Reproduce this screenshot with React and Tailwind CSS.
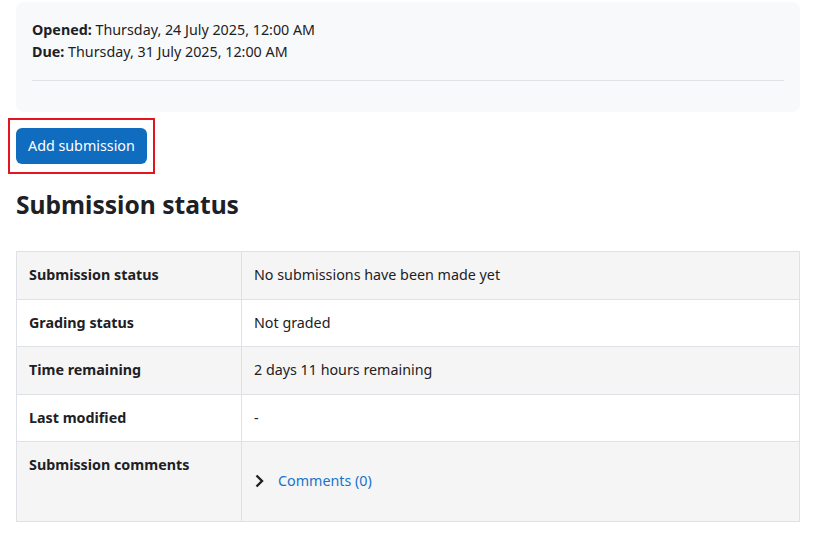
import React from 'react';

const rows = [
  { label: 'Submission status', value: 'No submissions have been made yet' },
  { label: 'Grading status', value: 'Not graded' },
  { label: 'Time remaining', value: '2 days 11 hours remaining' },
  { label: 'Last modified', value: '-' },
];

function ChevronRight() {
  return (
    <svg width="11" height="16" viewBox="0 0 11 16" className="shrink-0">
      <path d="M2.5 2.5l5.5 5.5-5.5 5.5" fill="none" stroke="#1d2125" strokeWidth="2.4" />
    </svg>
  );
}

function StatusRow({ label, children, striped, tall }) {
  return (
    <div className={`flex border-t border-[#dee2e6] first:border-t-0 ${striped ? 'bg-[#f5f5f5]' : 'bg-white'}`}>
      <div className={`w-[225px] shrink-0 border-r border-[#dee2e6] px-3 pt-3 ${tall ? 'pb-[44px]' : 'pb-3'} font-bold leading-[22.5px]`}>
        {label}
      </div>
      <div className="flex-1 px-3 py-3 leading-[22.5px]">{children}</div>
    </div>
  );
}

export default function App() {
  return (
    <div className="min-h-[553px] bg-white pl-4 pr-[15px] pt-[2px] text-[14.3px] text-[#1d2125]" style={{ fontFamily: '"Noto Sans", sans-serif' }}>
      <div className="rounded-lg bg-[#f8f9fa] px-4 pt-[17px] pb-[31px]">
        <div className="leading-[22px]">
          <strong>Opened:</strong> Thursday, 24 July 2025, 12:00 AM
        </div>
        <div className="leading-[22px]">
          <strong>Due:</strong> Thursday, 31 July 2025, 12:00 AM
        </div>
        <hr className="mt-[17px] border-t border-[#dee2e6]" />
      </div>

      <div className="-ml-2 mt-[6px] inline-block border-2 border-[#e3161f] px-[6px] py-2">
        <button className="rounded-md bg-[#0f6cbf] px-3 py-[6px] leading-[24px] text-white">Add submission</button>
      </div>

      <h3 className="mt-[15px] text-[24.6px] font-bold leading-[32px]">Submission status</h3>

      <div className="mt-[30px] border border-[#dee2e6]">
        {rows.map((r, i) => (
          <StatusRow key={r.label} label={r.label} striped={i % 2 === 0}>
            {r.value}
          </StatusRow>
        ))}
        <StatusRow label="Submission comments" striped tall>
          <div className="mt-[16px] flex items-center gap-[13px]">
            <ChevronRight />
            <a className="text-[#1a73c8]">Comments (0)</a>
          </div>
        </StatusRow>
      </div>
    </div>
  );
}
